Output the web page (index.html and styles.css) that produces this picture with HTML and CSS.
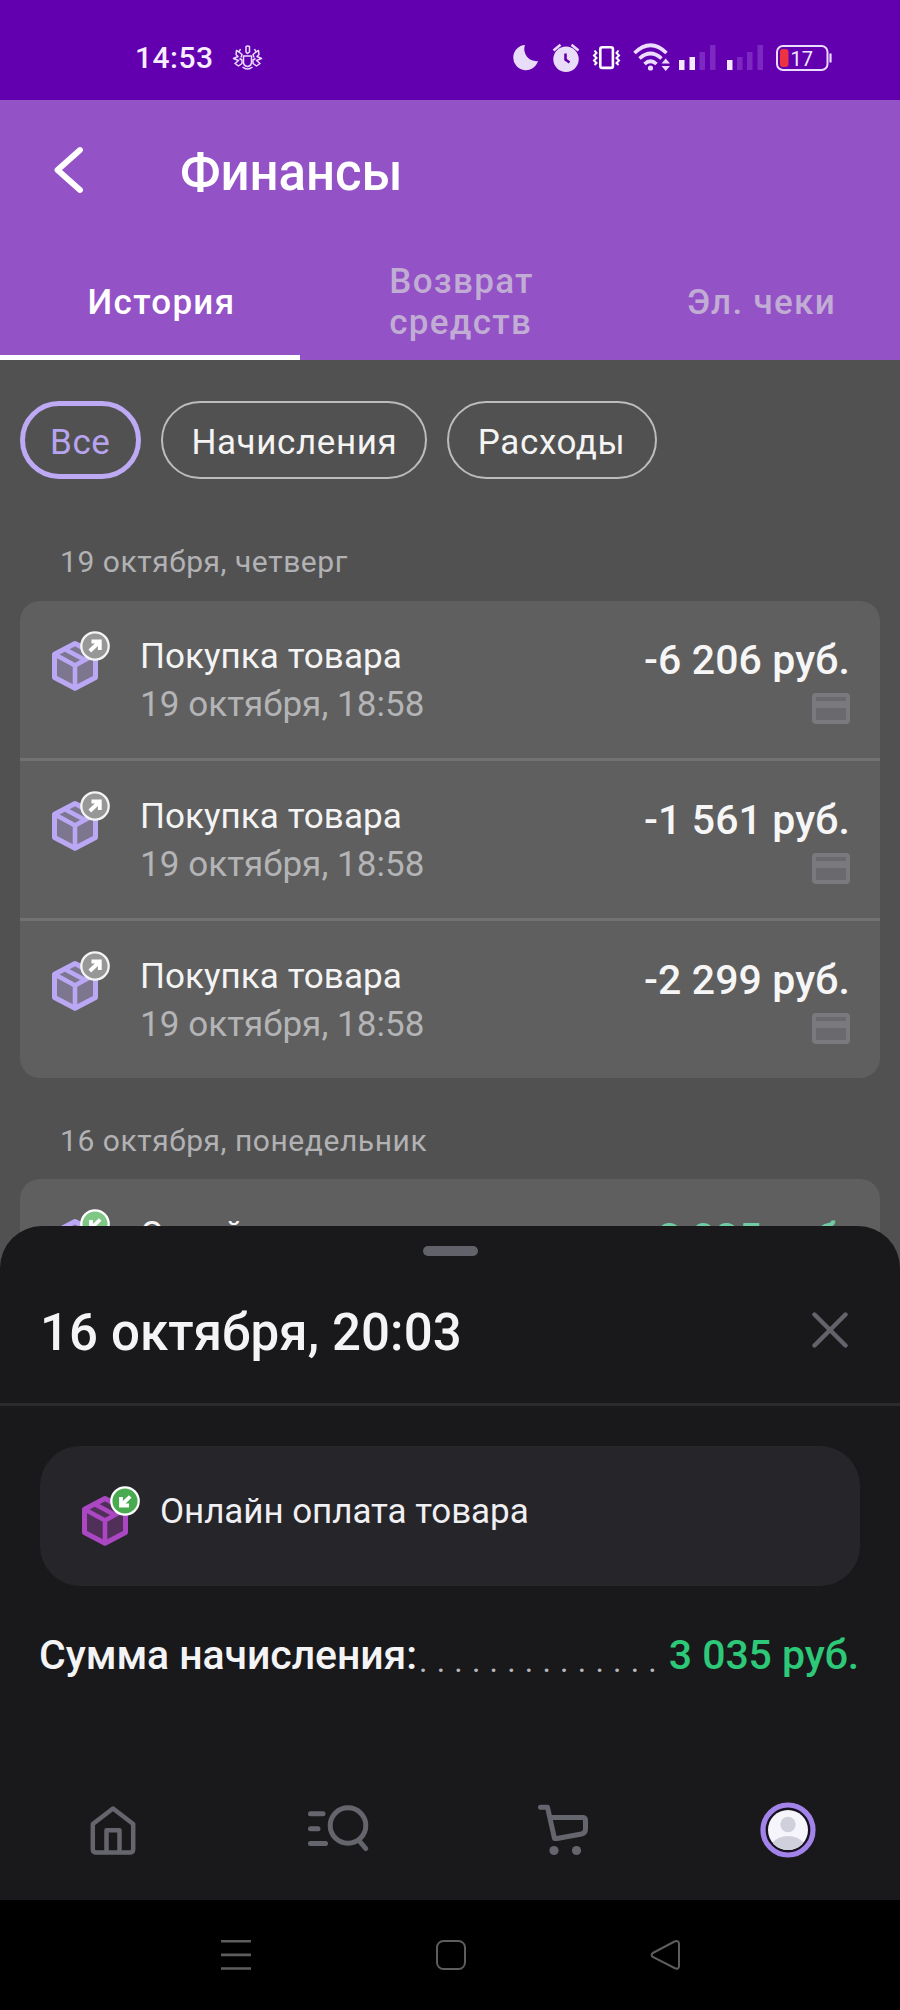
FILE: index.html
```
<!DOCTYPE html>
<html lang="ru">
<head>
<meta charset="utf-8">
<title>Финансы</title>
<link rel="stylesheet" href="styles.css">
</head>
<body>
<svg class="defs" width="0" height="0">
  <symbol id="box" viewBox="50 629 62 64">
    <path d="M75 643.5 95.5 654.3V677.5L75 688.3 54.5 677.5V654.3Z" fill="currentColor" fill-opacity=".32" stroke="currentColor" stroke-width="5" stroke-linejoin="round"/>
    <path d="M55 654.5 75 665.5 95 654.5M75 665.5V688M64.5 649 85 660" fill="none" stroke="currentColor" stroke-width="4.6"/>
  </symbol>
  <symbol id="badge-out" viewBox="50 629 62 64">
    <circle cx="95" cy="646" r="13.7" fill="#979797" stroke="#f4f4f4" stroke-width="2.3"/>
    <path d="M91.500 641.5H99.8V650M99.3 642 89.8 651" fill="none" stroke="#fff" stroke-width="3.8"/>
  </symbol>
  <symbol id="badge-in" viewBox="50 629 62 64">
    <circle cx="95" cy="646" r="13.7" fill="currentColor" stroke="#fff" stroke-width="2.3"/>
    <path d="M99 650.5H91V642M91.4 650 100.2 641.5" fill="none" stroke="#fff" stroke-width="3.8"/>
  </symbol>
  <symbol id="card" viewBox="0 0 38 31">
    <rect x="2" y="2" width="34" height="27" rx="2" fill="#6a6a6e" stroke="#7a7a7e" stroke-width="4"/>
    <path d="M2 11.5H36" stroke="#7a7a7e" stroke-width="7"/>
  </symbol>
</svg>
<div class="screen">
  <header class="status">
    <span class="time">14:53</span>
    <svg class="bug" width="31" height="30" viewBox="232 43 31 30" fill="none" stroke="#ecdcff" stroke-width="1.5" stroke-linejoin="round">
      <path d="M243.5 56H251.500V62Q251.500 66 247.500 66.500Q243.500 66 243.500 62Z"/>
      <path d="M246 52V46.500Q247.500 45.500 249.500 46.500V52L247.500 53.500Z"/>
      <path d="M240.500 49 239 52 242 54.500 241 57.500M239 52 236.500 50.500 236 54.500 238 56.500 233.500 58.500 238.500 60.500 235 63.500 238.500 66 242 63.500V60L239.500 58.500M254.500 49 256 52 253 54.500 254 57.500M256 52 258.500 50.500 259 54.500 257 56.500 261.500 58.500 256.500 60.500 260 63.500 256.500 66 253 63.500V60L255.500 58.500"/>
      <path d="M242.500 67Q247.500 71 252.500 67"/>
    </svg>
    <div class="indicators">
      <svg width="26" height="30" viewBox="513 43 26 30"><path d="M525 45A12.600 12.600 0 1 0 538 61A12 12 0 0 1 525 45Z" fill="#e9dcf8"/></svg>
      <svg width="28" height="30" viewBox="552 43 28 30"><circle cx="566" cy="59.200" r="12.700" fill="#e9dcf8"/><path d="M553.500 50.500 560.500 44.700M578.500 50.500 571.500 44.700" stroke="#e9dcf8" stroke-width="2.600"/><path d="M565.500 53.500V59.500L569.500 62.500" fill="none" stroke="#6200b0" stroke-width="2.600"/></svg>
      <svg width="29" height="30" viewBox="592 43 29 30" fill="none" stroke="#fff"><rect x="600.300" y="47.300" width="12.600" height="20.600" rx="2" stroke-width="2.600"/><path d="M594.500 50.500 596.500 53 594 55.500 596.500 58 594 60.500 596.500 63 594.500 65M618.500 50.500 616.500 53 619 55.500 616.500 58 619 60.500 616.500 63 618.500 65" stroke-width="2"/></svg>
      <svg width="39" height="30" viewBox="632 43 39 30" fill="none" stroke="#ecdcff" stroke-width="3.600"><path d="M634.500 53Q650.500 37.500 666.500 53M639.500 58.500Q650.500 48.500 661.500 58.500M644.500 64Q650.500 58.500 656.500 64"/><circle cx="650.500" cy="68" r="2.600" fill="#ecdcff" stroke="none"/><path d="M661.500 63.500 665.700 58.500 670 63.500ZM661.500 66 665.700 71 670 66Z" fill="#ecdcff" stroke="none"/></svg>
      <svg width="37" height="30" viewBox="679 43 37 30"><path d="M679 60H684.500V70H679ZM689.500 57H695V70H689.500Z" fill="#f3e9ff"/><path d="M699.500 52H705V70H699.500ZM710 45H715.500V70H710Z" fill="#7c29c2"/></svg>
      <svg width="37" height="30" viewBox="727 43 37 30"><path d="M727 60H732.500V70H727Z" fill="#f3e9ff"/><path d="M737 57H742.500V70H737ZM747 52H752.500V70H747ZM757.500 45H763V70H757.500Z" fill="#7c29c2"/></svg>
      <svg width="57" height="30" viewBox="776 43 57 30"><rect x="777" y="46" width="50.500" height="24" rx="6" fill="none" stroke="#ecdcff" stroke-width="2"/><rect x="780" y="49" width="8.500" height="18" rx="3" fill="#ec3340"/><path d="M830.500 53.500V62.500" stroke="#ecdcff" stroke-width="2.200"/><text class="battery" x="790.500" y="65.500">17</text></svg>
    </div>
  </header>

  <div class="appbar">
    <div class="titlebar">
      <svg width="30" height="48" viewBox="54 146 30 48"><path d="M80 150 57.500 170 80 190" fill="none" stroke="#fff" stroke-width="5.800" stroke-linecap="round" stroke-linejoin="round"/></svg>
      <h1>Финансы</h1>
    </div>
    <nav class="tabs">
      <a class="tab active">История</a>
      <a class="tab">Возврат<br>средств</a>
      <a class="tab">Эл. чеки</a>
    </nav>
  </div>

  <main class="history">
    <div class="chips">
      <span class="chip selected">Все</span>
      <span class="chip">Начисления</span>
      <span class="chip">Расходы</span>
    </div>
    <div class="date first">19 октября, четверг</div>
    <section class="group">
      <div class="row">
        <svg class="box" width="62" height="64"><use href="#box"/><use href="#badge-out"/></svg>
        <div class="info"><div class="name">Покупка товара</div><div class="when">19 октября, 18:58</div></div>
        <div class="sum"><div>-6 206 руб.</div><svg width="38" height="31"><use href="#card"/></svg></div>
      </div>
      <div class="row">
        <svg class="box" width="62" height="64"><use href="#box"/><use href="#badge-out"/></svg>
        <div class="info"><div class="name">Покупка товара</div><div class="when">19 октября, 18:58</div></div>
        <div class="sum"><div>-1 561 руб.</div><svg width="38" height="31"><use href="#card"/></svg></div>
      </div>
      <div class="row">
        <svg class="box" width="62" height="64"><use href="#box"/><use href="#badge-out"/></svg>
        <div class="info"><div class="name">Покупка товара</div><div class="when">19 октября, 18:58</div></div>
        <div class="sum"><div>-2 299 руб.</div><svg width="38" height="31"><use href="#card"/></svg></div>
      </div>
    </section>
    <div class="date">16 октября, понедельник</div>
    <section class="group">
      <div class="row">
        <svg class="box" width="62" height="64"><use href="#box"/><use class="green-soft" href="#badge-in"/></svg>
        <div class="info"><div class="name">Онлайн оплата товара</div></div>
        <div class="sum income"><div>3 035 руб.</div></div>
      </div>
    </section>
  </main>

  <section class="sheet">
    <div class="handle"></div>
    <div class="sheet-head">
      <h2>16 октября, 20:03</h2>
      <svg width="36" height="36" viewBox="812 1312 36 36"><path d="M814.500 1314.500 845.500 1345.500M845.500 1314.500 814.500 1345.500" stroke="#63636c" stroke-width="4.400" stroke-linecap="round"/></svg>
    </div>
    <div class="operation">
      <svg class="box violet" width="62" height="64"><use href="#box"/><use class="green" href="#badge-in"/></svg>
      <div class="op-name">Онлайн оплата товара</div>
    </div>
    <div class="total">
      <span class="label">Сумма начисления:</span>
      <span class="dots">..............</span>
      <span class="value">3 035 руб.</span>
    </div>
    <nav class="bottom">
      <a><svg width="64" height="60" viewBox="80.500 1800 64 60" fill="none" stroke="#65656d" stroke-width="4.500" stroke-linejoin="round"><path d="M92.300 1824 112.500 1808.500 132.700 1824V1849Q132.700 1852.500 129.200 1852.500H95.800Q92.300 1852.500 92.300 1849Z"/><path d="M106 1852V1830.300H119V1852"/></svg></a>
      <a><svg width="64" height="60" viewBox="305.500 1800 64 60" fill="none" stroke="#65656d" stroke-width="5" stroke-linecap="round"><circle cx="347.500" cy="1825.500" r="17.800"/><path d="M358.500 1840.500 365.200 1848.500M310 1813.700H322.500M310 1828.700H317.500M310 1843.500H325"/></svg></a>
      <a><svg width="64" height="60" viewBox="530.500 1800 64 60" fill="none" stroke="#65656d" stroke-width="5" stroke-linecap="round" stroke-linejoin="round"><path d="M540 1807.300H547L554 1838.500H556.500L581 1834Q585 1833 585 1829V1820.500Q585 1817.500 582 1817.500H549.500"/><circle cx="553.500" cy="1850.500" r="4.600" fill="#65656d" stroke="none"/><circle cx="576" cy="1850.500" r="4.600" fill="#65656d" stroke="none"/></svg></a>
      <a><svg width="64" height="60" viewBox="755.500 1800 64 60"><clipPath id="face"><circle cx="787.500" cy="1830" r="20"/></clipPath><circle cx="787.500" cy="1830" r="25" fill="#17101f" stroke="#a283ea" stroke-width="5.200"/><circle cx="787.500" cy="1830" r="20" fill="#f6f5fb"/><g clip-path="url(#face)" fill="#cfd0dc"><circle cx="787.500" cy="1824.500" r="7.700"/><ellipse cx="787.500" cy="1848" rx="17" ry="12"/></g></svg></a>
    </nav>
  </section>

  <footer class="system">
    <svg width="32" height="32" viewBox="220 1939 32 32"><path d="M221 1941.300H251M221 1954.900H251M221 1968.500H251" stroke="#5d5d5d" stroke-width="2.600"/></svg>
    <svg width="32" height="32" viewBox="434.500 1939 32 32"><rect x="436.500" y="1941" width="28" height="28" rx="6.500" fill="none" stroke="#5d5d5d" stroke-width="2"/></svg>
    <svg width="32" height="32" viewBox="650 1939 32 32"><path d="M652.800 1953 674.500 1941.500Q679 1940 679 1944V1966Q679 1970 674.500 1968L652.800 1957Q650.500 1955 652.800 1953Z" fill="none" stroke="#5d5d5d" stroke-width="2"/></svg>
  </footer>
</div>
</body>
</html>
```
FILE: styles.css
```
* { box-sizing: border-box; }

body {
  margin: 0;
  background: #000;
  font-family: Roboto, "Noto Sans", sans-serif;
}

svg { display: block; flex: none; }
.defs { position: absolute; }

.screen {
  position: relative;
  width: 900px;
  height: 2010px;
  overflow: hidden;
  display: flex;
  flex-direction: column;
}

/* Status bar */
.status {
  flex: none;
  height: 100px;
  padding: 16px 67px 0 135px;
  display: flex;
  align-items: center;
  background: #6200b0;
}
.time {
  margin-top: -1px;
  font-size: 30px;
  font-weight: 500;
  letter-spacing: .48px;
  color: #f6edff;
}
.bug { margin-left: 18px; }
.indicators {
  margin-left: auto;
  display: grid;
  grid-template-columns: 39px 40px 40px 47px 48px 49px 57px;
}
.battery {
  font-size: 20px;
  fill: #f3e9ff;
}

/* App bar */
.appbar {
  flex: none;
  height: 260px;
  background: #9452c7;
}
.titlebar {
  height: 146px;
  padding-left: 54px;
  display: flex;
  align-items: center;
  gap: 96px;
}
.titlebar svg { margin-bottom: 6px; }
h1, h2 {
  margin: 0;
  font-size: 51px;
  font-weight: 500;
  line-height: 60px;
  color: #fff;
}
h1 { letter-spacing: -.1px; }
.tabs {
  height: 114px;
  display: grid;
  grid-template-columns: repeat(3, 1fr);
}
.tab {
  padding: 3px 0 0 23px;
  border-bottom: 5px solid transparent;
  display: flex;
  align-items: center;
  justify-content: center;
  font-size: 35px;
  font-weight: 500;
  line-height: 41px;
  letter-spacing: 1.3px;
  color: #c1add4;
}
.tab.active {
  color: #fff;
  border-color: #fff;
}

/* History list */
.history {
  height: 1540px;
  flex: none;
  padding: 41px 20px 0;
  background: #515151;
}
.chips { display: flex; gap: 20px; }
.chip {
  height: 78px;
  padding: 5px 28px 0 28.5px;
  border: 2px solid #bcbcbc;
  border-radius: 39px;
  display: flex;
  align-items: center;
  font-size: 35px;
  letter-spacing: .6px;
  color: #f4f4f4;
}
.chip:last-child { padding-right: 30px; }
.chip.selected {
  padding: 5px 25.4px 0 25px;
  border: 5px solid #bda9f4;
  color: #b7a4ee;
}
.date {
  height: 101px;
  padding: 0 0 18px 40px;
  display: flex;
  align-items: flex-end;
  font-size: 30px;
  line-height: 40px;
  letter-spacing: .55px;
  color: #b2b2b4;
}
.date.first { height: 122px; padding-bottom: 19px; }
.group {
  background: #5f5f5f;
  border-radius: 20px;
}
.row {
  height: 157px;
  padding: 28px 30px 0;
  display: flex;
}
.row + .row {
  height: 160px;
  border-top: 3px solid #727272;
}
.box { color: #bba8f5; }
.info {
  margin: 4px 0 0 28px;
  font-size: 35px;
  line-height: 48px;
  letter-spacing: .05px;
}
.name { color: #f4f4f4; }
.when { color: #b4b4b6; }
.sum {
  margin: 7px 0 0 auto;
  display: flex;
  flex-direction: column;
  align-items: flex-end;
  gap: 9px;
  font-size: 41px;
  font-weight: 500;
  line-height: 48px;
  letter-spacing: .1px;
  color: #f6f6f6;
}
.income { color: #6ecba4; }
.green-soft { color: #7fc784; }
.green { color: #49ab50; }

/* Operation details, slides over the list */
.sheet {
  position: absolute;
  left: 0;
  right: 0;
  top: 1226px;
  height: 674px;
  padding-top: 20px;
  border-radius: 42px 42px 0 0;
  background: #19191b;
  display: flex;
  flex-direction: column;
}
.handle {
  flex: none;
  align-self: center;
  width: 55px;
  height: 10px;
  border-radius: 5px;
  background: #62626b;
}
.sheet-head {
  flex: none;
  height: 150px;
  padding: 0 52px 0 40px;
  border-bottom: 3px solid #2b2b2e;
  display: flex;
  align-items: center;
  justify-content: space-between;
}
h2 {
  padding-top: 7px;
  letter-spacing: .1px;
  color: #f4f4f6;
}
.operation {
  flex: none;
  height: 140px;
  margin: 40px 40px 0;
  padding: 38px 40px 0;
  border-radius: 40px;
  background: #262529;
  display: flex;
}
.violet { color: #ab47c2; }
.op-name {
  margin: 4px 0 0 18px;
  font-size: 35px;
  line-height: 48px;
  letter-spacing: -.06px;
  color: #f0f0f4;
}
.total {
  flex: none;
  margin-top: 45px;
  padding: 0 41px 0 39px;
  display: flex;
  font-size: 41px;
  font-weight: 500;
  line-height: 48px;
  letter-spacing: -.08px;
  color: #f4f4f6;
  white-space: nowrap;
}
.dots {
  flex: 1;
  min-width: 0;
  padding: 6px 0 0 2px;
  font-size: 32px;
  font-weight: 400;
  letter-spacing: 9.2px;
  color: #b8b8bc;
}
.value { color: #2dc878; }
.bottom {
  flex: none;
  height: 140px;
  margin-top: auto;
  display: grid;
  grid-template-columns: repeat(4, 1fr);
  place-items: center;
}

/* System navigation */
.system {
  flex: none;
  height: 110px;
  padding: 0 218px 0 220px;
  display: flex;
  align-items: center;
  justify-content: space-between;
  background: #000;
}
```
